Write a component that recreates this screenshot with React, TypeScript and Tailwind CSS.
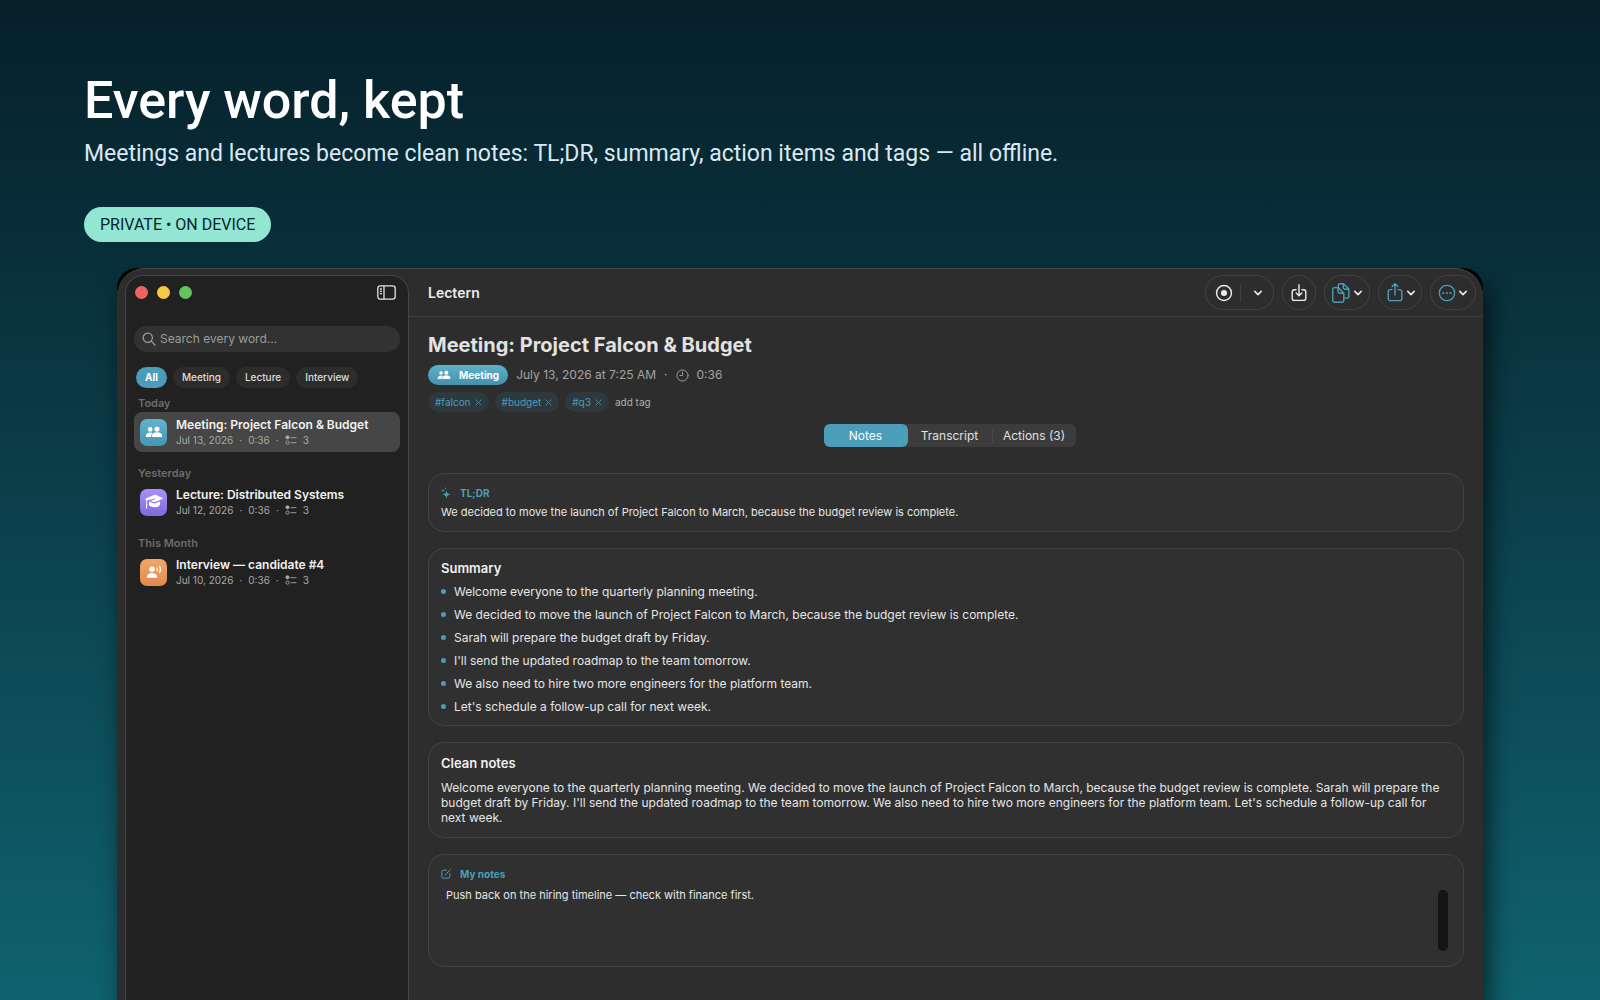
import { ReactNode, useState } from "react"

type Kind = "meeting" | "lecture" | "interview"

const RECORDINGS: { group: string; kind: Kind; title: string; date: string }[] = [
  { group: "Today", kind: "meeting", title: "Meeting: Project Falcon & Budget", date: "Jul 13, 2026" },
  { group: "Yesterday", kind: "lecture", title: "Lecture: Distributed Systems", date: "Jul 12, 2026" },
  { group: "This Month", kind: "interview", title: "Interview — candidate #4", date: "Jul 10, 2026" },
]

const SUMMARY = [
  "Welcome everyone to the quarterly planning meeting.",
  "We decided to move the launch of Project Falcon to March, because the budget review is complete.",
  "Sarah will prepare the budget draft by Friday.",
  "I'll send the updated roadmap to the team tomorrow.",
  "We also need to hire two more engineers for the platform team.",
  "Let's schedule a follow-up call for next week.",
]

const KIND_COLORS: Record<Kind, string> = {
  meeting: "from-[#5fb4cb] to-[#4596b3]",
  lecture: "from-[#a892f8] to-[#8069dc]",
  interview: "from-[#f2a66c] to-[#e08a4b]",
}

/* Icons */

function PeopleIcon({ className }: { className?: string }) {
  return (
    <svg viewBox="0 0 18 12" fill="currentColor" className={className}>
      <circle cx="5.2" cy="3.4" r="2.3" />
      <path d="M.8 10.6c0-2.5 1.8-4.1 4.4-4.1 1 0 1.9.3 2.6.7-1.1 1-1.7 2.1-1.7 3.9H1.3c-.3 0-.5-.2-.5-.5z" />
      <circle cx="12" cy="3.1" r="2.6" />
      <path d="M6.9 10.4c0-2.6 2-4.1 5.1-4.1s5.2 1.5 5.2 4.1c0 .4-.3.7-.7.7H7.6c-.4 0-.7-.3-.7-.7z" />
    </svg>
  )
}

function CapIcon() {
  return (
    <svg viewBox="0 0 18 16" fill="currentColor" className="w-[18px] h-4">
      <path d="M9.5.8c.3-.1.7-.1 1 0l6.6 3c.6.3.6 1 0 1.3l-6.6 3c-.6.3-1.3.3-1.9 0L5.5 6.7l4.6-1.4c.6-.2.4-1-.2-.9L3.3 6c-.9.3-1.3.9-1.3 1.8v2.4c.4.3.5.8.3 1.3l-.7 3c-.1.5-.8.5-.8 0l.2-3.2c0-.5 0-.9.2-1.2V7.5c0-.6.1-1 .4-1.4l-.8-.4c-.6-.3-.6-1.1 0-1.3z" />
      <path d="M4 7.4 8.7 9.3c.6.3 1.2.3 1.8 0L15 7.4v3c0 1.600-2.400 2.800-5.400 2.800-2.200 0-4.200-.6-5.200-1.700-.3-.3-.4-.7-.4-1.100z" />
    </svg>
  )
}

function SpeakerIcon() {
  return (
    <svg viewBox="0 0 18 14" className="w-[18px] h-3.5" fill="currentColor">
      <circle cx="7" cy="4.3" r="2.7" />
      <path d="M1.8 12.2c0-2.5 2.1-4.2 5.2-4.2s5.2 1.7 5.2 4.2c0 .4-.3.6-.6.6H2.4c-.3 0-.6-.2-.6-.6z" />
      <path
        d="M12 3c.6 1 .6 2.100 0 3.100M14.600 1.300c1.200 2 1.200 4.500 0 6.500"
        fill="none"
        stroke="currentColor"
        strokeWidth="1.2"
        strokeLinecap="round"
      />
    </svg>
  )
}

function ChecklistIcon() {
  return (
    <svg viewBox="0 0 12 10" fill="none" stroke="currentColor" strokeWidth="0.9" className="w-3 h-2.5">
      <circle cx="2.5" cy="2.3" r="1.6" fill="currentColor" />
      <circle cx="2.5" cy="7.6" r="1.6" />
      <path d="M6 2.700h5M6 7.700h5" strokeLinecap="round" />
    </svg>
  )
}

function Chevron() {
  return (
    <svg
      viewBox="0 0 10 6"
      fill="none"
      stroke="currentColor"
      strokeWidth="1.6"
      strokeLinecap="round"
      strokeLinejoin="round"
      className="w-2.5 h-1.5 text-[#e6e6e6]"
    >
      <path d="M1.800 1.400 5 4.600l3.200-3.200" />
    </svg>
  )
}

function LineIcon({ className, box = 20, children }: { className: string; box?: number; children: ReactNode }) {
  return (
    <svg
      viewBox={`0 0 ${box} ${box}`}
      fill="none"
      stroke="currentColor"
      strokeWidth="1.4"
      strokeLinecap="round"
      strokeLinejoin="round"
      className={className}
    >
      {children}
    </svg>
  )
}

function KindIcon({ kind }: { kind: Kind }) {
  if (kind === "lecture") return <CapIcon />
  if (kind === "interview") return <SpeakerIcon />
  return <PeopleIcon className="w-[18px] h-3" />
}

/* Pieces */

function ToolButton({ label, className, children }: { label: string; className: string; children: ReactNode }) {
  return (
    <button
      aria-label={label}
      className={`flex items-center justify-center h-[35px] rounded-full border border-[#424242] ${className}`}
    >
      {children}
    </button>
  )
}

function Card({ className = "", children }: { className?: string; children: ReactNode }) {
  return (
    <section className={`rounded-2xl border border-[#434343] bg-[#303030] px-3 ${className}`}>{children}</section>
  )
}

function Sidebar() {
  const [filter, setFilter] = useState("All")
  const [selected, setSelected] = useState(0)

  return (
    <aside className="flex flex-col shrink-0 w-[284px] mt-1.5 ml-2 px-2 rounded-t-[18px] border border-b-0 border-[#444] bg-[#212121]">
      <div className="flex items-center h-8 pl-px pr-1">
        <div className="flex gap-[9px]">
          <span className="size-[13px] rounded-full bg-[#ee6560]" />
          <span className="size-[13px] rounded-full bg-[#f5c946]" />
          <span className="size-[13px] rounded-full bg-[#61c35c]" />
        </div>
        <button aria-label="Toggle sidebar" className="ml-auto text-[#e4e4e4]">
          <svg viewBox="0 0 19 15" fill="none" stroke="currentColor" strokeWidth="1.3" className="w-[19px] h-[15px]">
            <rect x=".8" y=".8" width="17.4" height="13.4" rx="2.6" />
            <path d="M7 1v13M2.900 4h2M2.900 6.300h2M2.900 8.600h2" />
          </svg>
        </button>
      </div>

      <label className="flex items-center gap-1 h-[26px] mt-[18px] px-2 rounded-full bg-[#323232] text-[#a0a0a0]">
        <LineIcon className="size-[14px] shrink-0" box={14}>
          <circle cx="5.8" cy="5.8" r="4.6" strokeWidth="1.2" />
          <path d="m9.200 9.200 3.800 3.800" strokeWidth="1.2" />
        </LineIcon>
        <input
          type="text"
          placeholder="Search every word..."
          aria-label="Search every word"
          className="w-full bg-transparent text-xs outline-none placeholder:text-[#9c9c9c]"
        />
      </label>

      <div className="flex gap-1.5 mt-[15px] pl-0.5">
        {["All", "Meeting", "Lecture", "Interview"].map((name) => (
          <button
            key={name}
            onClick={() => setFilter(name)}
            className={`h-[21px] px-[9px] rounded-full text-[10px] ${
              filter === name ? "bg-[#4a9cb8] text-white font-bold" : "bg-[#2c2c2c] text-[#dedede] font-medium"
            }`}
          >
            {name}
          </button>
        ))}
      </div>

      <div className="flex flex-col gap-[13px] mt-[7px]">
        {RECORDINGS.map((rec, i) => (
          <div key={rec.title}>
            <h3 className="pl-1 text-[11px] leading-4 font-semibold text-[#6c6c6c]">{rec.group}</h3>
            <button
              onClick={() => setSelected(i)}
              className={`flex items-center gap-[9px] w-full h-10 mt-px px-1.5 rounded-lg text-left ${
                selected === i ? "bg-[#464646]" : ""
              }`}
            >
              <span
                className={`flex items-center justify-center size-[27px] rounded-[7px] bg-linear-to-b text-white ${KIND_COLORS[rec.kind]}`}
              >
                <KindIcon kind={rec.kind} />
              </span>
              <span>
                <span className="block text-xs leading-4 font-semibold text-[#f2f2f2]">{rec.title}</span>
                <span className="flex items-center gap-1.5 text-[10px] leading-[14px] text-[#a8a8a8]">
                  {rec.date} <span>·</span> 0:36 <span>·</span> <ChecklistIcon /> <span>3</span>
                </span>
              </span>
            </button>
          </div>
        ))}
      </div>
    </aside>
  )
}

function Toolbar() {
  return (
    <header className="flex items-center h-12 pl-[19px] pr-[7px] border-b border-[#3f3f3f]">
      <h2 className="text-sm font-semibold text-[#ececec]">Lectern</h2>
      <div className="flex gap-2 ml-auto text-[#4b9db9]">
        <ToolButton label="Record" className="w-[69px] pr-0.5 text-[#ececec]">
          <LineIcon className="size-[18px]">
            <circle cx="10" cy="10" r="8.3" strokeWidth="1.6" />
            <circle cx="10" cy="10" r="3.4" fill="currentColor" stroke="none" />
          </LineIcon>
          <span className="w-px h-[18px] ml-[7px] mr-3 bg-[#3f3f3f]" />
          <Chevron />
        </ToolButton>
        <ToolButton label="Import" className="w-[34px] text-[#ececec]">
          <LineIcon className="size-5">
            <path d="M7 6.800H5.400A2.200 2.200 0 0 0 3.200 9v6.200a2.200 2.200 0 0 0 2.200 2.200h9.200a2.200 2.200 0 0 0 2.200-2.200V9a2.200 2.200 0 0 0-2.200-2.200H13M10 1.800v10.800M7.200 10l2.800 2.800 2.800-2.800" />
          </LineIcon>
        </ToolButton>
        <ToolButton label="Copy" className="w-[46px] gap-0.5">
          <LineIcon className="size-5">
            <path d="M7.300 4V2.400A1.600 1.600 0 0 1 8.900.8h3.700l5.200 5.200v7.500a1.600 1.600 0 0 1-1.600 1.600h-2.400M12.400 1v3.600A1.600 1.600 0 0 0 14 6.200h3.600" />
            <path d="M3.400 4.600h3.800L12.800 10.200v7.400a1.600 1.600 0 0 1-1.600 1.600H3.400a1.600 1.600 0 0 1-1.600-1.600V6.200a1.600 1.600 0 0 1 1.600-1.600zM7 4.800v3.800a1.600 1.600 0 0 0 1.600 1.600h3.900" />
          </LineIcon>
          <Chevron />
        </ToolButton>
        <ToolButton label="Share" className="w-11 gap-px">
          <LineIcon className="size-5">
            <path d="M7 6.600H5.400a2.200 2.200 0 0 0-2.200 2.200v6.600a2.200 2.200 0 0 0 2.200 2.200h9.200a2.200 2.200 0 0 0 2.200-2.200V8.800a2.200 2.200 0 0 0-2.200-2.200H13M10 12V.8M7.200 3.600 10 .8l2.800 2.800" />
          </LineIcon>
          <Chevron />
        </ToolButton>
        <ToolButton label="More" className="w-[46px] gap-0.5">
          <LineIcon className="size-[18px]">
            <circle cx="10" cy="10" r="8.5" strokeWidth="1.5" />
            <path d="M6 10h.01M10 10h.01M14 10h.01" strokeWidth="2.4" />
          </LineIcon>
          <Chevron />
        </ToolButton>
      </div>
    </header>
  )
}

function Note() {
  const [tab, setTab] = useState("Notes")
  const [notes, setNotes] = useState("Push back on the hiring timeline — check with finance first.")

  return (
    <article className="px-[19px] text-[#e6e6e6]">
      <h1 className="mt-3.5 text-xl leading-7 font-bold text-[#e2e2e2]">Meeting: Project Falcon & Budget</h1>

      <div className="flex items-center mt-1.5 text-xs leading-5 text-[#a3a3a3]">
        <span className="flex items-center gap-2 h-5 px-[9px] rounded-full bg-linear-to-b from-[#5db1c9] to-[#4391ad] text-white text-[10px] font-bold">
          <PeopleIcon className="w-3.5 h-2.5" />
          Meeting
        </span>
        <span className="ml-2">July 13, 2026 at 7:25 AM</span>
        <span className="mx-2">·</span>
        <LineIcon className="size-[13px] mr-2" box={14}>
          <circle cx="7" cy="7" r="6" strokeWidth="1" />
          <path d="M7 3.300V7H4.200" strokeWidth="1" />
        </LineIcon>
        <span>0:36</span>
      </div>

      <div className="flex items-center gap-1.5 mt-[7px] text-[10px]">
        {["#falcon", "#budget", "#q3"].map((tag) => (
          <span key={tag} className="flex items-center gap-1 h-5 px-[7px] rounded-full bg-[#2d393d] text-[#4b9db9]">
            {tag}
            <button aria-label={`Remove ${tag}`} className="text-[#4c7f90]">
              <svg viewBox="0 0 7 7" stroke="currentColor" className="size-[7px]">
                <path d="m.5.500 6 6m0-6-6 6" />
              </svg>
            </button>
          </span>
        ))}
        <input
          type="text"
          placeholder="add tag"
          aria-label="add tag"
          className="w-20 bg-transparent outline-none placeholder:text-[#b0b0b0]"
        />
      </div>

      <div className="flex justify-center mt-3 pl-[7px]">
        <div className="flex rounded-md bg-[#3c3c3c] text-xs">
          {["Notes", "Transcript", "Actions (3)"].map((name, i) => (
            <button
              key={name}
              onClick={() => setTab(name)}
              className={`flex items-center w-[84px] h-[23px] rounded-md ${
                tab === name ? "bg-[#4b9db9] text-white" : "text-[#e0e0e0]"
              }`}
            >
              {i === 2 && <span className="w-px h-3.5 bg-[#4a4a4a]" />}
              <span className="flex-1">{name}</span>
            </button>
          ))}
        </div>
      </div>

      <div className="flex flex-col gap-4 mt-[26px]">
        <Card className="pt-[11px] pb-[11px]">
          <h3 className="flex items-center gap-[9px] text-[10px] leading-4 font-bold text-[#4b9db9]">
            <svg viewBox="0 0 10 12" fill="currentColor" className="w-2.5 h-3">
              <path d="M5.500 3.200c.5 2.900 1.200 3.600 4.300 4.200-3.100.6-3.800 1.300-4.300 4.300-.5-3-1.200-3.700-4.300-4.300 3.100-.6 3.800-1.300 4.300-4.200zM2 1.700c.2 1.300.6 1.600 1.900 1.900C2.600 3.900 2.200 4.200 2 5.500 1.800 4.200 1.400 3.900.1 3.600 1.400 3.300 1.800 3 2 1.700zM4.600.1c.1.800.4 1.100 1.200 1.200-.8.100-1.100.4-1.200 1.200-.1-.8-.4-1.100-1.200-1.200.8-.1 1.100-.4 1.200-1.200z" />
            </svg>
            TL;DR
          </h3>
          <p className="mt-[3px] text-[11px] leading-4">{SUMMARY[1]}</p>
        </Card>

        <Card className="pt-[11px] pb-[7px]">
          <h3 className="text-[13px] leading-4 font-semibold text-[#f0f0f0]">Summary</h3>
          <ul className="mt-1 text-xs leading-[23px]">
            {SUMMARY.map((line) => (
              <li key={line} className="flex items-center gap-2">
                <span className="size-[5px] rounded-full bg-[#4b9db9]" />
                {line}
              </li>
            ))}
          </ul>
        </Card>

        <Card className="pt-3 pb-3">
          <h3 className="text-[13px] leading-4 font-semibold text-[#f0f0f0]">Clean notes</h3>
          <p className="mt-[9px] text-xs leading-[15px]">{SUMMARY.join(" ")}</p>
        </Card>

        <Card className="pt-[11px] pb-[15px]">
          <h3 className="flex items-center gap-[9px] text-[10px] leading-4 font-bold text-[#4b9db9]">
            <LineIcon className="size-2.5" box={10}>
              <path d="M5.500 1.200H2.400A1.600 1.600 0 0 0 .8 2.800v4.800a1.600 1.600 0 0 0 1.600 1.600h4.800a1.600 1.600 0 0 0 1.600-1.600V4.600M4 6.200 9.200.8" strokeWidth="1" />
            </LineIcon>
            <label htmlFor="my-notes">My notes</label>
          </h3>
          <div className="flex h-[69px] pr-[3px]">
            <textarea
              id="my-notes"
              value={notes}
              onChange={(e) => setNotes(e.target.value)}
              className="flex-1 mt-[3px] px-[5px] resize-none bg-transparent text-[11px] leading-5 outline-none"
            />
            <span className="self-end w-2.5 h-[61px] rounded-full bg-[#141414]" />
          </div>
        </Card>
      </div>
    </article>
  )
}

export default function App() {
  return (
    <div className="flex flex-col h-screen overflow-hidden bg-linear-to-b from-[#06202a] to-[#0f626f] font-['Inter','Noto_Sans',sans-serif]">
      <div className="px-[84px] pt-[68px] font-['Roboto','Inter',sans-serif]">
        <p className="text-[52px] leading-[66px] font-medium text-white">Every word, kept</p>
        <p className="mt-1 text-[23px] leading-8 text-[#dbe7f2]">
          Meetings and lectures become clean notes: TL;DR, summary, action items and tags — all offline.
        </p>
        <span className="inline-flex items-center h-[35px] mt-[37px] px-4 rounded-full bg-[#92e6d2] text-base text-[#06242c]">
          PRIVATE • ON DEVICE
        </span>
      </div>

      <main className="flex flex-1 min-h-0 mx-[117px] mt-[26px] rounded-t-[20px] bg-black shadow-[6px_14px_24px_rgba(0,0,0,0.6)]">
        <div className="flex flex-1 min-w-0 rounded-t-[28px] border-t border-[#4a4a4a] bg-[#2d2d2d] overflow-hidden">
          <Sidebar />
          <div className="flex-1 min-w-0">
            <Toolbar />
            <Note />
          </div>
        </div>
      </main>
    </div>
  )
}
